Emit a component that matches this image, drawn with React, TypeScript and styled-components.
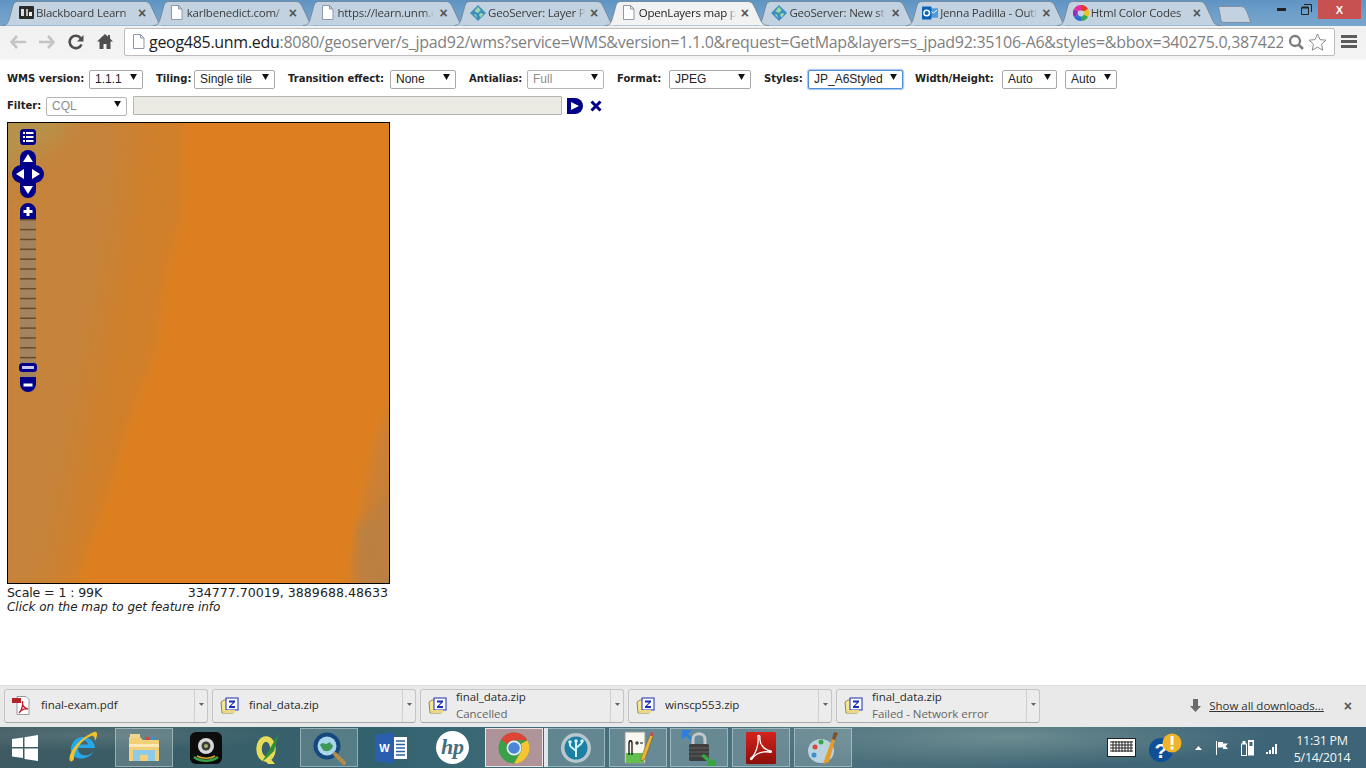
import React from "react";
import styled, { createGlobalStyle } from "styled-components";

const Global = createGlobalStyle`
  html, body { margin: 0; padding: 0; background: #fff; overflow: hidden; }
  * { box-sizing: border-box; }
`;
const UI = `"Open Sans", "Noto Sans", sans-serif`;

const Shell = styled.div`
  width: 1366px; height: 768px; display: flex; flex-direction: column; overflow: hidden;
`;
/* ---------- tab strip ---------- */
const TabStrip = styled.div`
  height: 26px; flex: none; display: flex; align-items: stretch; padding-left: 4px; position: relative;
  background: linear-gradient(180deg, #5f93c2 0%, #6c9ec9 45%, #79a6cc 100%);
  font-family: ${UI};
`;
const TabRoot = styled.div<{ $active?: boolean }>`
  position: relative; width: 150.7px; flex: none; display: flex; align-items: center;
  padding: 1px 0 2px 14px; z-index: ${p => (p.$active ? 2 : 1)};
`;
const TabShape = styled.svg`
  position: absolute; left: -2px; top: 0; width: 165px; height: 26px; z-index: -1;
`;
const Favicon = styled.span`
  width: 16px; height: 16px; flex: none; display: flex; align-items: center; justify-content: center;
`;
const TabTitle = styled.span<{ $active?: boolean }>`
  margin-left: 2px; width: 97px; flex: none; white-space: nowrap; overflow: hidden; font-size: 11.5px; letter-spacing: -.22px;
  color: ${p => (p.$active ? "#1c1c1c" : "#3c3c3c")};
  -webkit-mask-image: linear-gradient(90deg, #000 90%, transparent 100%);
`;
const TabClose = styled.span`
  margin-left: 5px; font-size: 14px; font-weight: 700; color: #555; line-height: 1; font-family: "Liberation Sans", sans-serif;
`;
const NewTab = styled.svg`
  width: 34px; height: 18px; margin: 5px 0 0 8px; flex: none;
`;
const WindowControls = styled.div`
  margin-left: auto; display: flex; height: 19px; align-items: center; padding-right: 5px; color: #222;
`;
const WinBtn = styled.span<{ $w: number }>`
  width: ${p => p.$w}px; display: flex; justify-content: center;
`;
const WinClose = styled.span`
  width: 43px; height: 19px; background: #c75050; color: #fff; display: flex; align-items: center; justify-content: center;
  font: 700 11px "Liberation Sans", sans-serif;
`;
/* ---------- toolbar ---------- */
const Toolbar = styled.div`
  height: 34px; flex: none; background: linear-gradient(180deg, #f1f1f1, #f4f4f4); display: flex; align-items: center;
  padding: 0 0 2px 3px; border-bottom: 1px solid #f8f8f8;
`;
const NavBtn = styled.span`
  width: 29px; height: 28px; flex: none; display: flex; align-items: center; justify-content: center;
`;
const Omnibox = styled.div`
  margin-left: 5px; width: 1211px; height: 28px; background: #fff; border: 1px solid #bdbdbd; border-radius: 2px;
  display: flex; align-items: center; padding-left: 7px; position: relative; overflow: hidden; flex: none;
`;
const Url = styled.div`
  margin-left: 4px; width: 1134px; overflow: hidden; white-space: nowrap; flex: none; color: #7f7f7f;
  font: 16px ${UI}; letter-spacing: -.29px;
  b { font-weight: 400; color: #1c1c1c; }
`;
const OmniIcon = styled.span<{ $ml: number }>`
  margin-left: ${p => p.$ml}px; display: flex; flex: none;
`;
const MenuIcon = styled.span`
  margin-left: 6px; width: 16px; flex: none; display: flex; flex-direction: column; gap: 2px;
  i { height: 3px; background: #5c5c5c; display: block; }
`;
/* ---------- page ---------- */
const Page = styled.main`
  flex: 1; background: #fff; padding: 9px 0 0 7px; min-height: 0;
`;
const FormRow = styled.div<{ $mt?: number }>`
  display: flex; align-items: center; height: 19px; margin-top: ${p => p.$mt ?? 0}px;
`;
const Field = styled.label<{ $gap?: number; $mr?: number }>`
  display: flex; align-items: center; gap: ${p => p.$gap ?? 5}px; margin-right: ${p => p.$mr ?? 13}px;
`;
const FieldLabel = styled.span<{ $w: number }>`
  width: ${p => p.$w}px; flex: none;
  font: 700 10px "DejaVu Sans", Verdana, sans-serif; color: #222; white-space: nowrap;
`;
const SelectWrap = styled.span<{ $w: number }>`
  position: relative; width: ${p => p.$w}px; height: 19px; display: block; flex: none;
`;
const NativeSelect = styled.select<{ $focus?: boolean }>`
  appearance: none; width: 100%; height: 100%; margin: 0; padding: 0 0 0 5px; background: #fff; border-radius: 2px;
  border: 1px solid ${p => (p.$focus ? "#4d90d8" : "#a9a9a9")};
  box-shadow: ${p => (p.$focus ? "0 0 1px 1px rgba(90,150,220,.55)" : "none")};
  font: 12px "Liberation Sans", Arial, sans-serif; color: #222; opacity: 1;
  &:disabled { color: #8d8d8d; background: #fff; border-color: #b5b5b5; }
`;
const Caret = styled.svg`
  position: absolute; right: 6px; top: 5px; width: 7px; height: 6px; pointer-events: none;
`;
const FilterInput = styled.input`
  width: 429px; height: 19px; margin: 0 0 0 6px; padding: 0; flex: none; background: #ebebe4; border: 1px solid #b5b5b0; border-radius: 1px;
`;
const FilterBtn = styled.span<{ $ml: number }>`
  margin-left: ${p => p.$ml}px; display: flex; flex: none;
`;
const MapFrame = styled.div`
  position: relative; width: 383px; height: 462px; margin-top: 7px; border: 1px solid #000; overflow: hidden; background: #dd7f20;
`;
const MapImage = styled.svg`
  display: block; width: 381px; height: 460px;
`;
const ControlStack = styled.div`
  position: absolute; left: 3px; top: 5px; width: 34px; display: flex; flex-direction: column; align-items: center;
`;
const ControlIcon = styled.svg<{ $mt?: number }>`
  display: block; margin-top: ${p => p.$mt ?? 0}px;
`;
const StatusLine = styled.div`
  width: 381px; display: flex; justify-content: space-between; margin-top: 2px; height: 14px;
  font: 12.6px/14px "DejaVu Sans", Verdana, sans-serif; color: #222;
`;
const ScaleText = styled.span`
  letter-spacing: -.13px;
`;
const Hint = styled.div`
  font: italic 12px/14px "DejaVu Sans", Verdana, sans-serif; color: #222; letter-spacing: -.03px;
`;
/* ---------- download shelf ---------- */
const Shelf = styled.footer`
  height: 42px; flex: none; background: #e9e9e9; border-top: 1px solid #dedede; display: flex; align-items: center;
  padding: 0 0 2px 4px; gap: 4px; font-family: ${UI}; position: relative;
`;
const DownloadItem = styled.div`
  width: 204px; height: 34px; flex: none; display: flex; border: 1px solid #c6c6c6; border-bottom-color: #a9a9a9; border-radius: 3px; background: #ececec;
`;
const DownloadBody = styled.div`
  flex: 1; display: flex; align-items: center; padding-left: 7px; min-width: 0;
`;
const DownloadText = styled.div<{ $indent: number }>`
  margin-left: ${p => p.$indent}px; display: flex; flex-direction: column; gap: 0; font-size: 11.5px; letter-spacing: -.05px; line-height: 16.5px; color: #2a2a2a;
`;
const DownloadStatus = styled.span`
  color: #666;
`;
const DownloadChevron = styled.div`
  width: 13px; border-left: 1px solid #cfcfcf; display: flex; align-items: center; justify-content: center; padding-bottom: 2px;
`;
const ShowAll = styled.div`
  margin-left: auto; display: flex; align-items: center; font-size: 11.5px; letter-spacing: -.02px; color: #333; padding-right: 14px;
  u { margin-left: 8px; }
`;
const ShelfClose = styled.span`
  margin-left: 20px; color: #555; font: 700 14px "Liberation Sans", sans-serif;
`;
/* ---------- taskbar ---------- */
const Taskbar = styled.div`
  height: 41px; flex: none; display: flex; align-items: center; position: relative; color: #fff; font-family: ${UI};
  background:
    radial-gradient(ellipse 260px 30px at 1010px 10px, rgba(150,175,170,.5), transparent),
    radial-gradient(ellipse 200px 16px at 90px 8px, rgba(120,140,140,.4), transparent),
    linear-gradient(90deg, #3e5a62 0%, #33626f 28%, #4a7280 48%, #4b6f7c 62%, #3f6675 78%, #3d6478 100%);
`;
const StartButton = styled.div`
  width: 53.5px; flex: none; display: flex; justify-content: center; padding-right: 3px;
`;
const TaskSlot = styled.div<{ $kind?: "open" | "hot" }>`
  width: 58px; height: 39px; margin-right: 3.7px; flex: none; display: flex; align-items: center; justify-content: center; position: relative;
  background: ${p => (p.$kind === "hot" ? "rgba(235,170,170,.65)" : p.$kind === "open" ? "rgba(210,225,225,.22)" : "transparent")};
  border: 1px solid ${p => (p.$kind === "hot" ? "rgba(255,255,255,.75)" : p.$kind === "open" ? "rgba(210,225,225,.5)" : "transparent")};
`;
const HotSliver = styled.span`
  position: absolute; right: -6px; top: -1px; bottom: -1px; width: 4px; background: rgba(255,255,255,.85);
`;
const Tray = styled.div`
  margin-left: auto; display: flex; align-items: center; padding-right: 14px;
`;
const TrayIcon = styled.span<{ $ml: number }>`
  margin-left: ${p => p.$ml}px; display: flex; flex: none;
`;
const Clock = styled.div`
  margin-left: 13px; width: 60px; text-align: center; font-size: 12.5px; line-height: 17px; letter-spacing: -.3px; color: #f4f7f8; padding-top: 2px;
`;

/* ---------- drawings ---------- */
const PageIcon = () => (
  <svg width="13" height="15" viewBox="0 0 13 15"><path d="M1.5.5h7l3.5 3.5v10.500h-10.500z M8.500.5v3.500h3.500" fill="#fff" stroke="#8d99a6" /></svg>
);
const BlackboardIcon = () => (
  <svg width="15" height="13" viewBox="0 0 15 13"><rect width="15" height="13" rx="1" fill="#2b2b2b" /><rect x="2" y="3" width="3" height="7" fill="#ddd" /><rect x="7" y="3" width="2" height="7" fill="#bbb" /><rect x="10" y="6" width="3" height="4" fill="#eee" /></svg>
);
const GeoIcon = () => (
  <svg width="18" height="18" viewBox="0 0 18 18"><path d="M9 0l9 9-9 9-9-9z" fill="#3d8fc0" /><path d="M9 2l3 4-3 3-4-2zM12 9l3 1-3 4-2-3zM4 10l3 1 1 4z" fill="#9fd8a8" /></svg>
);
const OutlookIcon = () => (
  <svg width="17" height="16" viewBox="0 0 17 16"><rect x="7" y="3" width="10" height="10" fill="#4f9ad8" /><path d="M8 5l4 3 4-3" fill="none" stroke="#fff" /><rect y="1" width="10" height="14" rx="1" fill="#0a62b4" /><circle cx="5" cy="8" r="3" fill="none" stroke="#fff" strokeWidth="1.600" /></svg>
);
const WheelIcon = () => (
  <svg width="16" height="16" viewBox="0 0 16 16"><path d="M8 0a8 8 0 0 1 7 4l-4 2.500a3 3 0 0 0-3-1z" fill="#e8332a" /><path d="M15 4a8 8 0 0 1 0 8l-4-2.500a3 3 0 0 0 0-3z" fill="#f2c21a" /><path d="M15 12a8 8 0 0 1-7 4v-4.500a3 3 0 0 0 3-2z" fill="#37a848" /><path d="M8 16a8 8 0 0 1-7-4l4-2.500a3 3 0 0 0 3 2z" fill="#2a6fdc" /><path d="M1 12a8 8 0 0 1 0-8l4 2.500a3 3 0 0 0 0 3z" fill="#8d2fc0" /><path d="M1 4a8 8 0 0 1 7-4v5.500a3 3 0 0 0-3 1z" fill="#e52f9a" /></svg>
);
const tabPath = "M0 25.500C5 25.500 6 23 7.500 18L11 5.500C12 2.500 13.500 1.500 16 1.500H143C146 1.500 147.500 3 149 6L156 21C157.500 24 159 25.500 164 25.500";
const Tab = ({ icon, title, active }: { icon: React.ReactNode; title: string; active?: boolean }) => (
  <TabRoot $active={active}>
    <TabShape viewBox="0 0 165 26">
      <path d={tabPath + "Z"} fill={active ? "#f2f2f2" : "#c2d2e1"} />
      <path d={tabPath} fill="none" stroke="#6f7f90" strokeWidth=".8" />
    </TabShape>
    <Favicon>{icon}</Favicon>
    <TabTitle $active={active}>{title}</TabTitle>
    <TabClose>×</TabClose>
  </TabRoot>
);
const Select = ({ w, value, disabled, focus }: { w: number; value: string; disabled?: boolean; focus?: boolean }) => (
  <SelectWrap $w={w}>
    <NativeSelect $focus={focus} disabled={disabled} defaultValue={value}><option>{value}</option></NativeSelect>
    <Caret viewBox="0 0 8 7"><path d="M0 0h8L4 7z" fill="#111" /></Caret>
  </SelectWrap>
);
const ZipIcon = () => (
  <svg width="19" height="17" viewBox="0 0 19 17">
    <path d="M1 5l3-2h9v13H2z" fill="#f5e69a" stroke="#8f8a5a" />
    <rect x="6" y="1" width="12" height="12" fill="#fff" stroke="#1a2fb0" />
    <path d="M9 3.500h6v1.500l-4 4h4V11H9V9.500l4-4H9z" fill="#1a2fb0" />
    <rect x="3" y="13" width="12" height="3" fill="#e9d986" />
  </svg>
);
const PdfIcon = () => (
  <svg width="18" height="19" viewBox="0 0 18 19">
    <path d="M5 .5h9l3 3v15H5z" fill="#fff" stroke="#9a9a9a" />
    <rect x="0" y="2" width="9" height="5" fill="#b3232a" />
    <path d="M7 17c3-3 4-8 3.500-12 -.5 4 2 7 5.500 8-4-.5-7 1-9 4z" fill="none" stroke="#c7232b" strokeWidth="1.300" />
  </svg>
);
const Download = ({ name, status, pdf }: { name: string; status?: string; pdf?: boolean }) => (
  <DownloadItem>
    <DownloadBody>
      {pdf ? <PdfIcon /> : <ZipIcon />}
      <DownloadText $indent={status ? 9 : pdf ? 11 : 10}>
        <span>{name}</span>
        {status && <DownloadStatus>{status}</DownloadStatus>}
      </DownloadText>
    </DownloadBody>
    <DownloadChevron>
      <svg width="5" height="3" viewBox="0 0 5 3"><path d="M0 0h5L2.500 3z" fill="#666" /></svg>
    </DownloadChevron>
  </DownloadItem>
);
const NAVY = "#00008b";
const LayerBtn = () => (
  <ControlIcon width="18" height="18" viewBox="0 0 18 18">
    <rect x="1" y="1" width="16" height="16" rx="3.500" fill={NAVY} />
    <g fill="#fff"><rect x="4" y="4" width="2" height="2" /><rect x="7" y="4" width="7.500" height="2" /><rect x="4" y="8" width="2" height="2" /><rect x="7" y="8" width="7.500" height="2" /><rect x="4" y="12" width="2" height="2" /><rect x="7" y="12" width="7.500" height="2" /></g>
  </ControlIcon>
);
const PanBtn = () => (
  <ControlIcon $mt={4} width="34" height="48" viewBox="0 0 34 48">
    <rect x="9" y="0" width="16" height="48" rx="8" fill={NAVY} />
    <rect x="1" y="15" width="32" height="18" rx="9" fill={NAVY} />
    <path d="M17 4l5 8H12zM17 44l-5-8h10zM5 24l8-5v10zM29 24l-8-5v10z" fill="#fff" />
  </ControlIcon>
);
const ZoomBar = () => (
  <ControlIcon $mt={4} width="34" height="192" viewBox="0 0 34 192">
    <rect x="9" y="16" width="16" height="160" fill="#a4845f" />
    {Array.from({ length: 16 }, (_, i) => <rect key={i} x="9" y={17 + i * 9.85} width="16" height="1.500" fill="#6b4a28" />)}
    <path d="M9 17V9a8 8 0 0 1 16 0v8zM9 175v7a8 8 0 0 0 16 0v-7z" fill={NAVY} />
    <path d="M15.500 5h3v3h3v3h-3v3h-3v-3h-3V8h3zM12.500 181.500h9v3h-9z" fill="#fff" />
    <rect x="8" y="161" width="18" height="9" rx="3.500" fill={NAVY} />
    <rect x="11" y="164" width="12" height="3" fill="#c9c9ee" />
  </ControlIcon>
);
const MapPicture = () => (
  <MapImage viewBox="0 0 381 460" preserveAspectRatio="none">
    <defs>
      <filter id="soft" x="-30%" y="-30%" width="160%" height="160%"><feGaussianBlur stdDeviation="6" /></filter>
      <filter id="softer" x="-30%" y="-30%" width="160%" height="160%"><feGaussianBlur stdDeviation="16" /></filter>
      <filter id="softest" x="-60%" y="-60%" width="220%" height="220%"><feGaussianBlur stdDeviation="12" /></filter>
    </defs>
    <rect width="381" height="460" fill="#dd7f20" />
    <path d="M-20-20H176L172 100L155 160L150 220L120 300L100 370L60 480H-20z" fill="#d07f2c" filter="url(#soft)" />
    <path d="M-20-20H125L115 90L95 200L70 330L40 480H-20z" fill="#c5833a" filter="url(#softer)" />
    <path d="M-20-20H70L50 15L10 40L-20 60z" fill="#b6924c" filter="url(#softest)" />
    <path d="M400 240V480H340L352 400L368 320z" fill="#ca8035" filter="url(#soft)" />
    <path d="M400 350V480H352L348 430L368 385z" fill="#bc8040" filter="url(#soft)" />
    <path d="M350 410l8-20 3 20-6 18z" fill="#b3824a" filter="url(#soft)" />
    <path d="M410 435L362 470H410z" fill="#b08550" filter="url(#soft)" />
  </MapImage>
);
const ChromeLogo = ({ s = 32 }: { s?: number }) => (
  <svg width={s} height={s} viewBox="0 0 32 32">
    <circle cx="16" cy="16" r="15.500" fill="#3aa14a" />
    <path d="M16 .5A15.500 15.500 0 0 1 29.400 8.200H16a7.800 7.800 0 0 0-7 4.400L3.200 7.200A15.500 15.500 0 0 1 16 .5z" fill="#dd4437" />
    <path d="M29.400 8.200A15.500 15.500 0 0 1 16 31.500l6.800-11.800a7.800 7.800 0 0 0 0-7.800z" fill="#f6c534" />
    <circle cx="16" cy="16" r="7.500" fill="#e8eef8" /><circle cx="16" cy="16" r="5.800" fill="#4b86d8" />
  </svg>
);
const WinLogo = () => (
  <svg width="26" height="26" viewBox="0 0 26 26"><path d="M0 4l11-1.500V12H0zM12.500 2.300L26 0v12H12.500zM0 13.500h11V23L0 21.500zM12.500 13.500H26V26l-13.500-2z" fill="#fff" /></svg>
);
const IEIcon = () => (
  <svg width="32" height="36" viewBox="0 0 32 36">
    <path d="M4 20a12 12 0 0 1 24-2H11c0 8 9 10 15 4-4 9-22 9-22-2z M11 14.500h10c-.5-5.500-9-5.500-10 0z" fill="#25a8e6" fillRule="evenodd" />
    <path d="M3 31C0 24 12 8 27 2c4-1 4 3 1 9 0-3-1-6-4-5C14 10 6 22 7 29c-1 2-3 3-4 2z" fill="#f2c22d" />
  </svg>
);
const FolderIcon = () => (
  <svg width="32" height="30" viewBox="0 0 32 30">
    <path d="M1 4h11l3 3h16v21H1z" fill="#f3cf76" /><rect x="2" y="1" width="10" height="4" fill="#f0d791" />
    <rect x="17" y="4" width="5" height="3" fill="#d9473c" /><rect x="23" y="4" width="5" height="3" fill="#3b8ed0" />
    <path d="M1 11h30v3H1z" fill="#fbe9b8" />
    <path d="M5 17h22v11h-7v-6h-8v6H5z" fill="#8ecbe8" />
  </svg>
);
const CameraIcon = () => (
  <svg width="32" height="32" viewBox="0 0 32 32">
    <rect width="32" height="32" rx="6" fill="#0c0c0c" />
    <circle cx="16" cy="14" r="8" fill="#d8d8d8" /><circle cx="16" cy="14" r="4.500" fill="#3b3b3b" /><circle cx="16" cy="14" r="2" fill="#9cb36a" />
    <path d="M4 25c6 5 18 5 24 0" fill="none" stroke="#3aa14a" strokeWidth="2.500" /><path d="M7 24c5 3 13 3 18 0" fill="none" stroke="#d9a02b" strokeWidth="1.500" />
  </svg>
);
const QgisIcon = () => (
  <svg width="24" height="34" viewBox="0 0 24 34">
    <ellipse cx="10" cy="18" rx="7" ry="10" fill="none" stroke="#e6dc58" strokeWidth="5.500" />
    <path d="M7 27l6-1 6 7h-7z" fill="#e6dc58" /><path d="M6 31L23 2l-5 18-5 5z" fill="#2f8f3a" />
  </svg>
);
const MagnifierIcon = () => (
  <svg width="34" height="34" viewBox="0 0 34 34">
    <circle cx="15" cy="15" r="13.500" fill="#15497c" /><circle cx="15" cy="15" r="9.500" fill="#a9d6ec" /><path d="M8 14c3-4 5 1 8-2s3 3 5 2c0 5-6 8-10 5z" fill="#3f9a58" />
    <path d="M23 23l9 9" stroke="#b58a4a" strokeWidth="4" strokeLinecap="round" />
  </svg>
);
const WordIcon = () => (
  <svg width="32" height="32" viewBox="0 0 32 32">
    <path d="M0 3l19-3v32L0 29z" fill="#2a5fae" /><rect x="19" y="5" width="13" height="22" fill="#fff" />
    <path d="M21 9h9M21 12.500h9M21 16h9M21 19.500h9M21 23h9" stroke="#2a5fae" strokeWidth="1.500" />
    <text x="9.500" y="20" textAnchor="middle" fontFamily="Liberation Sans" fontWeight="700" fontSize="11" fill="#fff">W</text>
  </svg>
);
const HpIcon = () => (
  <svg width="33" height="33" viewBox="0 0 33 33">
    <circle cx="16.500" cy="16.500" r="16.500" fill="#fff" />
    <text x="16.500" y="23" textAnchor="middle" fontFamily="Liberation Serif" fontStyle="italic" fontWeight="700" fontSize="22" fill="#44707f">hp</text>
  </svg>
);
const TreeIcon = () => (
  <svg width="32" height="32" viewBox="0 0 32 32">
    <circle cx="16" cy="16" r="15" fill="#b9c6cc" /><circle cx="16" cy="16" r="11.500" fill="#1c7fa4" />
    <path d="M16 25V10M16 19l-6-5M16 16l6-5M10 14V10M22 11V8" stroke="#cdf2f8" strokeWidth="2" fill="none" />
    <circle cx="16" cy="9" r="1.800" fill="#cdf2f8" /><circle cx="10" cy="10" r="1.800" fill="#cdf2f8" /><circle cx="22" cy="9" r="1.800" fill="#cdf2f8" />
  </svg>
);
const NotepadIcon = () => (
  <svg width="30" height="34" viewBox="0 0 30 34">
    <path d="M2 1h20v31H2z" fill="#f8f8f0" stroke="#999" /><path d="M3 22h18v10H3z" fill="#63c04f" />
    <path d="M6 24V12c0-3 3-3 3 0v12" fill="none" stroke="#111" strokeWidth="1.300" /><path d="M12 12h4M14 10v4M17 12h3" stroke="#111" />
    <path d="M18 27L27 4l3 1-8 23-4 2z" fill="#e8b63a" stroke="#8a5a1c" strokeWidth=".6" /><path d="M27 4l1-3 2.500 1-.5 3z" fill="#d24545" />
  </svg>
);
const LockIcon = () => (
  <svg width="34" height="36" viewBox="0 0 34 36">
    <path d="M0 0h8L0 8z M2 2l8 8" fill="#2a7fe0" stroke="#2a7fe0" strokeWidth="2.500" />
    <path d="M11 14V9c0-7 12-7 12 0v5" fill="none" stroke="#c5c9cb" strokeWidth="3" />
    <rect x="7" y="14" width="20" height="17" rx="1.500" fill="#3f3f3f" />
    <path d="M7 18h20M7 22h20M7 26h20" stroke="#626262" />
    <path d="M22 24l8 7 4-3v8H24l3-3-8-7z" fill="#35a83f" />
  </svg>
);
const AcrobatIcon = () => (
  <svg width="30" height="32" viewBox="0 0 30 32">
    <defs><linearGradient id="acro" x1="0" y1="0" x2="0" y2="1"><stop offset="0" stopColor="#d5221c" /><stop offset="1" stopColor="#8c0f0c" /></linearGradient></defs>
    <rect width="30" height="32" rx="1.500" fill="url(#acro)" />
    <path d="M5 26c5-4 8-14 7-21 -1-2 2-2 2 0 -1 7 4 13 11 14 1 1 0 2-2 1-7-1-13 1-17 7-1 1-2 0-1-1z" fill="none" stroke="#fff" strokeWidth="1.300" />
  </svg>
);
const PaintIcon = () => (
  <svg width="30" height="34" viewBox="0 0 30 34">
    <ellipse cx="13" cy="20" rx="13" ry="12" fill="#b9d3df" />
    <circle cx="7" cy="16" r="2.500" fill="#d9473c" /><circle cx="13" cy="11" r="2.500" fill="#3fa648" /><circle cx="6" cy="24" r="2.500" fill="#3b8ed0" />
    <path d="M15 33L24 8l3 1-6 22z" fill="#e89b2a" /><path d="M24 8l2-7 4 1-3 7z" fill="#7a5230" />
  </svg>
);

export default function App() {
  return (
    <Shell>
      <Global />
      <TabStrip>
        <Tab icon={<BlackboardIcon />} title="Blackboard Learn" />
        <Tab icon={<PageIcon />} title="karlbenedict.com/" />
        <Tab icon={<PageIcon />} title="https://learn.unm.edu" />
        <Tab icon={<GeoIcon />} title="GeoServer: Layer Preview" />
        <Tab active icon={<PageIcon />} title="OpenLayers map preview" />
        <Tab icon={<GeoIcon />} title="GeoServer: New style" />
        <Tab icon={<OutlookIcon />} title="Jenna Padilla - Outlook" />
        <Tab icon={<WheelIcon />} title="Html Color Codes" />
        <NewTab viewBox="0 0 34 18">
          <path d="M.5 1.500H22C26 1.500 27 3 29 7L33 17.500H6C3 17.500 3 15 2.500 12z" fill="#c2d2e1" stroke="#7d8fa1" />
        </NewTab>
        <WindowControls>
          <WinBtn $w={26}><svg width="9" height="3" viewBox="0 0 9 3"><rect width="9" height="3" fill="#222" /></svg></WinBtn>
          <WinBtn $w={24}>
            <svg width="11" height="11" viewBox="0 0 11 11"><path d="M3 .5h7.500V8M.5 3.500h7v7h-7z" fill="none" stroke="#222" /><path d="M1 3.500h6.500" stroke="#222" strokeWidth="2" /></svg>
          </WinBtn>
          <WinClose>X</WinClose>
        </WindowControls>
      </TabStrip>
      <Toolbar>
        <NavBtn>
          <svg width="16" height="14" viewBox="0 0 16 14"><path d="M7 1L1.500 7 7 13M2 7h14" fill="none" stroke="#c4c4c4" strokeWidth="2.600" /></svg>
        </NavBtn>
        <NavBtn>
          <svg width="16" height="14" viewBox="0 0 16 14"><path d="M9 1l5.500 6L9 13M14 7H0" fill="none" stroke="#c4c4c4" strokeWidth="2.600" /></svg>
        </NavBtn>
        <NavBtn>
          <svg width="16" height="16" viewBox="0 0 16 16"><path d="M13.500 10.500A6.200 6.200 0 1 1 13 4.500" fill="none" stroke="#4e4e4e" strokeWidth="2.600" /><path d="M15.500 1v6.500H9z" fill="#4e4e4e" /></svg>
        </NavBtn>
        <NavBtn>
          <svg width="16" height="15" viewBox="0 0 16 15"><path d="M8 0L0 7.500h2.500V15h4v-5h3v5h4V7.500H16l-3-3V1h-2v1.800z" fill="#4e4e4e" /></svg>
        </NavBtn>
        <Omnibox>
          <PageIcon />
          <Url>
            <b>geog485.unm.edu</b>:8080/geoserver/s_jpad92/wms?service=WMS&amp;version=1.1.0&amp;request=GetMap&amp;layers=s_jpad92:35106-A6&amp;styles=&amp;bbox=340275.0,387422
          </Url>
          <OmniIcon $ml={5}>
            <svg width="16" height="16" viewBox="0 0 16 16"><circle cx="7" cy="7" r="5" fill="none" stroke="#7c7c7c" strokeWidth="2.300" /><path d="M10.500 10.500L15 15" stroke="#7c7c7c" strokeWidth="2.500" /></svg>
          </OmniIcon>
          <OmniIcon $ml={4}>
            <svg width="19" height="18" viewBox="0 0 19 18"><path d="M9.500 1l2.500 5.600 6 .6-4.500 4 1.300 6-5.300-3.100-5.300 3.100 1.300-6-4.500-4 6-.6z" fill="none" stroke="#8a8a8a" /></svg>
          </OmniIcon>
        </Omnibox>
        <MenuIcon><i /><i /><i /></MenuIcon>
      </Toolbar>
      <Page>
        <FormRow>
          <Field><FieldLabel $w={77}>WMS version:</FieldLabel><Select w={54} value="1.1.1" /></Field>
          <Field><FieldLabel $w={33}>Tiling:</FieldLabel><Select w={81} value="Single tile" /></Field>
          <Field $gap={4}><FieldLabel $w={98}>Transition effect:</FieldLabel><Select w={66} value="None" /></Field>
          <Field><FieldLabel $w={53}>Antialias:</FieldLabel><Select w={77} value="Full" disabled /></Field>
          <Field><FieldLabel $w={47}>Format:</FieldLabel><Select w={82} value="JPEG" /></Field>
          <Field $mr={12}><FieldLabel $w={39}>Styles:</FieldLabel><Select w={95} value="JP_A6Styled" focus /></Field>
          <Field $mr={8}><FieldLabel $w={82}>Width/Height:</FieldLabel><Select w={55} value="Auto" /></Field>
          <Select w={52} value="Auto" />
        </FormRow>
        <FormRow $mt={8}>
          <Field $mr={0} $gap={4}><FieldLabel $w={35}>Filter:</FieldLabel><Select w={81} value="CQL" disabled /></Field>
          <FilterInput disabled />
          <FilterBtn $ml={5}>
            <svg width="16" height="16" viewBox="0 0 16 16"><path d="M0 0h8a8 8 0 0 1 0 16H0z" fill={NAVY} /><path d="M4 4l8 4-8 4z" fill="#fff" /></svg>
          </FilterBtn>
          <FilterBtn $ml={7}>
            <svg width="12" height="12" viewBox="0 0 12 12"><path d="M1.500 1.500l9 9M10.500 1.500l-9 9" stroke={NAVY} strokeWidth="3" /></svg>
          </FilterBtn>
        </FormRow>
        <MapFrame>
          <MapPicture />
          <ControlStack>
            <LayerBtn />
            <PanBtn />
            <ZoomBar />
          </ControlStack>
        </MapFrame>
        <StatusLine><ScaleText>Scale = 1 : 99K</ScaleText><span>334777.70019, 3889688.48633</span></StatusLine>
        <Hint>Click on the map to get feature info</Hint>
      </Page>
      <Shelf>
        <Download pdf name="final-exam.pdf" />
        <Download name="final_data.zip" />
        <Download name="final_data.zip" status="Cancelled" />
        <Download name="winscp553.zip" />
        <Download name="final_data.zip" status="Failed - Network error" />
        <ShowAll>
          <svg width="11" height="13" viewBox="0 0 11 13"><path d="M3 0h5v7h3l-5.500 6L0 7h3z" fill="#6a6a6a" /></svg>
          <u>Show all downloads...</u>
          <ShelfClose>×</ShelfClose>
        </ShowAll>
      </Shelf>
      <Taskbar>
        <StartButton><WinLogo /></StartButton>
        <TaskSlot><IEIcon /></TaskSlot>
        <TaskSlot $kind="open"><FolderIcon /></TaskSlot>
        <TaskSlot><CameraIcon /></TaskSlot>
        <TaskSlot><QgisIcon /></TaskSlot>
        <TaskSlot $kind="open"><MagnifierIcon /></TaskSlot>
        <TaskSlot><WordIcon /></TaskSlot>
        <TaskSlot><HpIcon /></TaskSlot>
        <TaskSlot $kind="hot"><ChromeLogo /><HotSliver /></TaskSlot>
        <TaskSlot $kind="open"><TreeIcon /></TaskSlot>
        <TaskSlot $kind="open"><NotepadIcon /></TaskSlot>
        <TaskSlot $kind="open"><LockIcon /></TaskSlot>
        <TaskSlot $kind="open"><AcrobatIcon /></TaskSlot>
        <TaskSlot $kind="open"><PaintIcon /></TaskSlot>
        <Tray>
          <TrayIcon $ml={0}>
            <svg width="29" height="19" viewBox="0 0 29 19"><rect x=".5" y=".5" width="28" height="18" fill="#fff" stroke="#222" /><path d="M3 4h23M3 7h23M3 10h23M3 13h23M6 3v11M9 3v11M12 3v11M15 3v11M18 3v11M21 3v11M24 3v11" stroke="#222" /></svg>
          </TrayIcon>
          <TrayIcon $ml={12}>
            <svg width="35" height="30" viewBox="0 0 35 30"><circle cx="13" cy="17" r="12" fill="#0f4f96" /><text x="13" y="25" textAnchor="middle" fontFamily="Liberation Sans" fontWeight="700" fontSize="21" fill="#fff">?</text><circle cx="24" cy="10" r="9.500" fill="#f0b429" /><rect x="22.500" y="3" width="3" height="9" fill="#fff" /><rect x="22.500" y="13.500" width="3" height="3" fill="#fff" /></svg>
          </TrayIcon>
          <TrayIcon $ml={12}>
            <svg width="7" height="4" viewBox="0 0 7 4"><path d="M0 4h7L3.500 0z" fill="#fff" /></svg>
          </TrayIcon>
          <TrayIcon $ml={14}>
            <svg width="13" height="14" viewBox="0 0 13 14"><path d="M.5 0v14" stroke="#fff" /><path d="M2 1h5v1.500h5L9.500 5 12 8H7V6.500H2z" fill="#fff" /></svg>
          </TrayIcon>
          <TrayIcon $ml={12}>
            <svg width="14" height="17" viewBox="0 0 14 17"><rect x=".5" y="5" width="5" height="11.500" fill="none" stroke="#fff" /><rect x="1.500" y="2" width="3" height="3" fill="#fff" /><rect x="7" y="1" width="6" height="15.500" fill="#fff" /><rect x="8.500" y="3" width="3" height="4" fill="#3e6b7c" /></svg>
          </TrayIcon>
          <TrayIcon $ml={11}>
            <svg width="13" height="12" viewBox="0 0 13 12"><path d="M0 10h2v2H0zM3 8h2v4H3zM6 5h2v7H6zM9 2h2v10H9z" fill="#fff" /></svg>
          </TrayIcon>
          <Clock>11:31 PM<br />5/14/2014</Clock>
        </Tray>
      </Taskbar>
    </Shell>
  );
}
